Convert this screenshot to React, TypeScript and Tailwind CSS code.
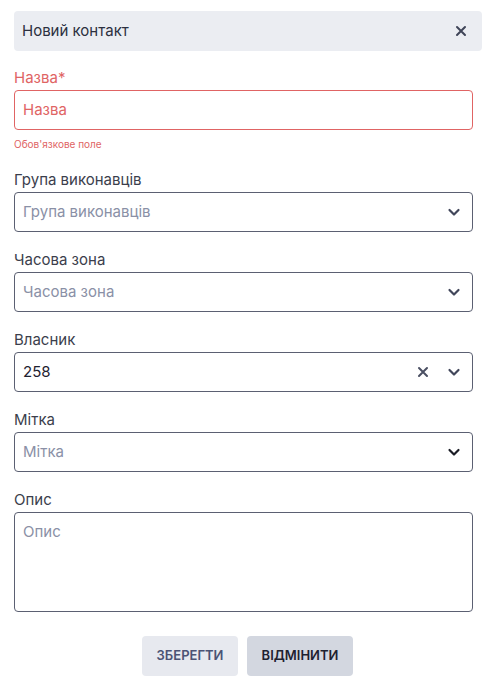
import React from "react";

const FONT = "font-['Inter','Noto_Sans',sans-serif]";

function Chevron({ dark = false }: { dark?: boolean }) {
  return (
    <svg
      width="14"
      height="14"
      viewBox="0 0 14 14"
      fill="none"
      className={dark ? "text-[#1b1d26]" : "text-[#41465a]"}
    >
      <path
        d="M2.5 5l4.5 4.5L11.5 5"
        stroke="currentColor"
        strokeWidth="2.2"
        strokeLinecap="round"
        strokeLinejoin="round"
      />
    </svg>
  );
}

function Cross({ size = 12 }: { size?: number }) {
  return (
    <svg width={size} height={size} viewBox="0 0 12 12" fill="none">
      <path
        d="M2 2l8 8M10 2l-8 8"
        stroke="currentColor"
        strokeWidth="2"
        strokeLinecap="round"
      />
    </svg>
  );
}

interface SelectProps {
  label: string;
  placeholder?: string;
  value?: string;
  clearable?: boolean;
  darkChevron?: boolean;
}

function SelectField({ label, placeholder, value, clearable, darkChevron }: SelectProps) {
  return (
    <div className="flex flex-col">
      <label className="text-[15px] leading-[20px] text-[#3b3e4c] mb-[2px]">{label}</label>
      <div className="w-[459px] h-[40px] border border-[#5b6072] rounded-[4px] flex items-center pl-[8px] pr-[11px]">
        <span
          className={
            value
              ? "flex-1 text-[15px] text-[#1f2230]"
              : "flex-1 text-[15px] text-[#8a90a6]"
          }
        >
          {value ?? placeholder}
        </span>
        {clearable && (
          <span className="text-[#4a4f62] mr-[18px] flex items-center">
            <Cross size={12} />
          </span>
        )}
        <Chevron dark={darkChevron} />
      </div>
    </div>
  );
}

export default function App() {
  return (
    <div className={`${FONT} bg-white min-h-screen px-[14px] pt-[11px] pb-[16px]`}>
      {/* Header */}
      <div className="w-[468px] h-[40px] rounded-[4px] bg-[#ebedf2] flex items-center justify-between pl-[8px] pr-[15px]">
        <span className="text-[15px] text-[#2c3040]">Новий контакт</span>
        <span className="text-[#3f4458] flex items-center">
          <Cross size={12} />
        </span>
      </div>

      <div className="mt-[17px] flex flex-col gap-[18px]">
        {/* Назва */}
        <div className="flex flex-col">
          <label className="text-[15px] leading-[20px] text-[#e06464] mb-[2px]">Назва*</label>
          <div className="w-[459px] h-[40px] border border-[#e06464] rounded-[4px] flex items-center pl-[8px]">
            <span className="text-[15px] text-[#e06464]">Назва</span>
          </div>
          <span className="mt-[6px] text-[10px] leading-[16px] text-[#e06464]">Обов'язкове поле</span>
        </div>

        <SelectField label="Група виконавців" placeholder="Група виконавців" />
        <SelectField label="Часова зона" placeholder="Часова зона" />
        <SelectField label="Власник" value="258" clearable />
        <SelectField label="Мітка" placeholder="Мітка" darkChevron />

        {/* Опис */}
        <div className="flex flex-col">
          <label className="text-[15px] leading-[20px] text-[#3b3e4c] mb-[2px]">Опис</label>
          <div className="w-[459px] h-[100px] border border-[#5b6072] rounded-[4px] pl-[8px] pt-[6px]">
            <span className="text-[15px] text-[#8a90a6]">Опис</span>
          </div>
        </div>
      </div>

      {/* Buttons */}
      <div className="mt-[24px] flex justify-center gap-[9px] -ml-[14px] w-[494px] pl-[1px]">
        <button className="w-[96px] h-[40px] rounded-[4px] bg-[#e7e9ef] text-[13px] font-semibold text-[#4b5375] uppercase">
          Зберегти
        </button>
        <button className="w-[106px] h-[40px] rounded-[4px] bg-[#d3d7e0] text-[13px] font-semibold text-[#1e2130] uppercase">
          Відмінити
        </button>
      </div>
    </div>
  );
}
